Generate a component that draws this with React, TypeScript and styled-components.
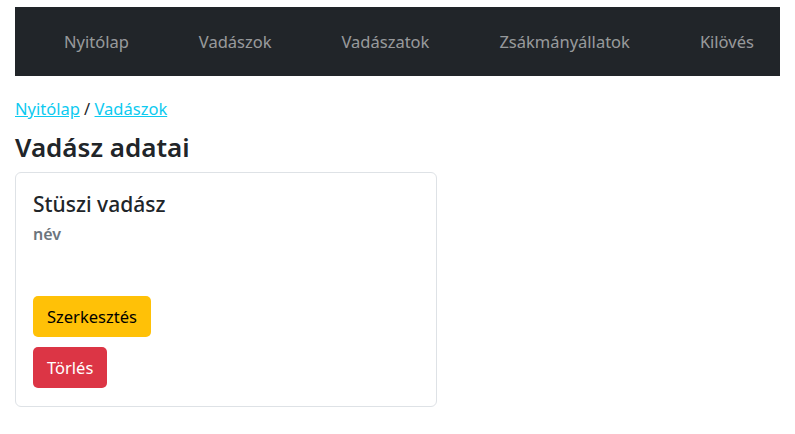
import styled, { createGlobalStyle } from 'styled-components';

const GlobalStyle = createGlobalStyle`
	*, *::before, *::after {
		box-sizing: border-box;
	}
	body {
		margin: 0;
		background: #fff;
		font-family: 'Noto Sans', 'Open Sans', sans-serif;
		color: #212529;
	}
`;

const Page = styled.div`
	padding: 7px 15px;
`;

const Navbar = styled.nav`
	display: flex;
	align-items: center;
	height: 69px;
	padding: 0 14px;
	background: #212529;
`;

const NavLink = styled.a`
	padding: 0 35px;
	font-size: 16.5px;
	color: rgba(255, 255, 255, 0.55);
	text-decoration: none;
	white-space: nowrap;
`;

const Breadcrumb = styled.div`
	margin-top: 20px;
	font-size: 16.5px;
	line-height: 25px;
`;

const Crumb = styled.a`
	color: #0dcaf0;
	text-decoration: underline;
`;

const Heading = styled.h1`
	margin: 10px 0 9px;
	font-size: 26px;
	font-weight: 600;
	line-height: 32px;
`;

const Card = styled.div`
	width: 422px;
	border: 1px solid #dee2e6;
	border-radius: 6px;
	padding: 17px 17px 18px;
`;

const Title = styled.h2`
	margin: 0;
	font-size: 21px;
	font-weight: 500;
	line-height: 28px;
`;

const Subtitle = styled.div`
	margin-top: 4px;
	font-size: 16px;
	font-weight: 600;
	color: #6c757d;
	line-height: 24px;
`;

const Actions = styled.div`
	display: flex;
	flex-direction: column;
	align-items: flex-start;
	gap: 10px;
	margin-top: 50px;
`;

const Button = styled.button<{ $variant: 'warning' | 'danger' }>`
	height: 41px;
	padding: 0 14px;
	border: none;
	border-radius: 5px;
	font-family: inherit;
	font-size: 16.5px;
	background: ${p => (p.$variant === 'warning' ? '#ffc107' : '#dc3545')};
	color: ${p => (p.$variant === 'warning' ? '#000' : '#fff')};
	cursor: pointer;
`;

const menu = ['Nyitólap', 'Vadászok', 'Vadászatok', 'Zsákmányállatok', 'Kilövés'];

export default function App() {
	return (
		<>
			<GlobalStyle />
			<Page>
				<Navbar>
					{menu.map(item => (
						<NavLink key={item} href="#">
							{item}
						</NavLink>
					))}
				</Navbar>
				<Breadcrumb>
					<Crumb href="#">Nyitólap</Crumb> / <Crumb href="#">Vadászok</Crumb>
				</Breadcrumb>
				<Heading>Vadász adatai</Heading>
				<Card>
					<Title>Stüszi vadász</Title>
					<Subtitle>név</Subtitle>
					<Actions>
						<Button $variant="warning">Szerkesztés</Button>
						<Button $variant="danger">Törlés</Button>
					</Actions>
				</Card>
			</Page>
		</>
	);
}
